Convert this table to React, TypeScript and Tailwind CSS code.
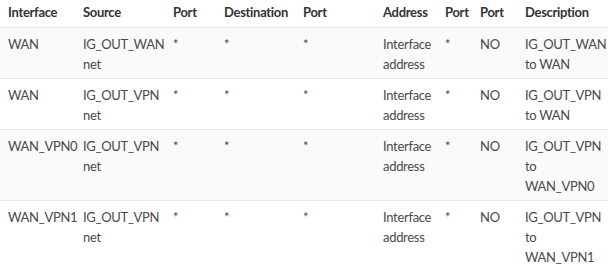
import React from 'react';

const columns = [
  { label: 'Interface', w: 'w-[75px]' },
  { label: 'Source', w: 'w-[90px]' },
  { label: 'Port', w: 'w-[51px]' },
  { label: 'Destination', w: 'w-[79px]' },
  { label: 'Port', w: 'w-[80px]' },
  { label: 'Address', w: 'w-[62px]' },
  { label: 'Port', w: 'w-[35px]' },
  { label: 'Port', w: 'w-[45px]' },
  { label: 'Description', w: 'w-[91px]' },
];

const rows = [
  ['WAN', 'IG_OUT_WAN net', '*', '*', '*', 'Interface address', '*', 'NO', 'IG_OUT_WAN to WAN'],
  ['WAN', 'IG_OUT_VPN net', '*', '*', '*', 'Interface address', '*', 'NO', 'IG_OUT_VPN to WAN'],
  ['WAN_VPN0', 'IG_OUT_VPN net', '*', '*', '*', 'Interface address', '*', 'NO', 'IG_OUT_VPN to WAN_VPN0'],
  ['WAN_VPN1', 'IG_OUT_VPN net', '*', '*', '*', 'Interface address', '*', 'NO', 'IG_OUT_VPN to WAN_VPN1'],
];

export default function App() {
  return (
    <div className="w-[608px] h-[267px] overflow-hidden bg-white font-['Lato',sans-serif] text-[13px] tracking-[-0.3px] leading-5 text-[#4a4a4a]">
      <table className="table-fixed w-[608px] border-collapse">
        <colgroup>
          {columns.map((c, i) => (
            <col key={i} className={c.w} />
          ))}
        </colgroup>
        <thead>
          <tr className="border-b border-[#e8e8e8]">
            {columns.map((c, i) => (
              <th key={i} className="text-left font-bold text-[#333] pl-2 pr-0 pt-[2px] pb-[5px] align-top whitespace-nowrap">
                {c.label}
              </th>
            ))}
          </tr>
        </thead>
        <tbody>
          {rows.map((r, ri) => (
            <tr key={ri} className={`border-b border-[#e8e8e8] ${ri % 2 === 0 ? 'bg-[#fafafa]' : 'bg-white'}`}>
              {r.map((cell, ci) => (
                <td key={ci} className="pl-2 pr-1 pt-[6px] pb-[4px] align-top">
                  {cell}
                </td>
              ))}
            </tr>
          ))}
        </tbody>
      </table>
    </div>
  );
}
